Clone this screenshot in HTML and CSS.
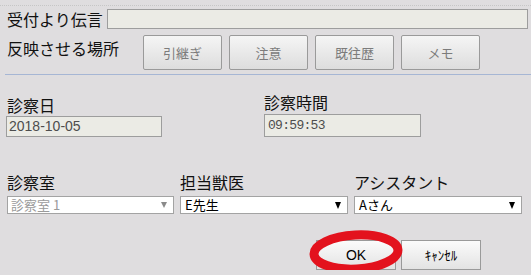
FILE: index.html
```
<!DOCTYPE html>
<html>
    <head>
        <meta charset="utf-8">
        <link rel="stylesheet" href="styles.css">
    </head>

    <body>
        <div class="dialog">
            <div class="message-row">
                <span class="label">受付より伝言</span>
                <span class="text-field"></span>
            </div>
            <div class="reflect-row">
                <span class="label reflect-label">反映させる場所</span>
                <div class="target-buttons">
                    <span class="target">引継ぎ</span>
                    <span class="target">注意</span>
                    <span class="target">既往歴</span>
                    <span class="target">メモ</span>
                </div>
            </div>
            <div class="divider"></div>

            <div class="visit-row">
                <div class="date-field">
                    <div class="label">診察日</div>
                    <div class="readonly date-value">2018-10-05</div>
                </div>
                <div class="time-field">
                    <div class="label">診察時間</div>
                    <div class="readonly time-value">09:59:53</div>
                </div>
            </div>

            <div class="select-row">
                <div class="pick">
                    <div class="label">診察室</div>
                    <div class="select disabled">
                        <span>診察室 1</span>
                        <span class="arrow"></span>
                    </div>
                </div>
                <div class="pick">
                    <div class="label">担当獣医</div>
                    <div class="select">
                        <span>E先生</span>
                        <span class="arrow"></span>
                    </div>
                </div>
                <div class="pick">
                    <div class="label">アシスタント</div>
                    <div class="select">
                        <span>Aさん</span>
                        <span class="arrow"></span>
                    </div>
                </div>
            </div>

            <div class="actions">
                <span class="action ok">OK</span>
                <span class="action cancel">ｷｬﾝｾﾙ</span>
                <svg class="mark" width="104" height="52" viewBox="0 0 104 52">
                    <ellipse cx="51" cy="25" rx="42" ry="17" fill="none"
                        stroke="#e3121d" stroke-width="9"
                        transform="rotate(-3 51 25)"/>
                </svg>
            </div>
        </div>
    </body>
</html>
```
FILE: styles.css
```
body {
    margin: 0;
    background: #dfdddf;
    font-family: "Noto Sans CJK JP", sans-serif;
    color: #111;
}

.dialog {
    margin-top: 5px;
    border-top: 1px dotted #c6c6c6;
    padding-top: 3px;
}

.label {
    font-size: 16px;
    line-height: 20px;
    white-space: nowrap;
}

.message-row {
    display: flex;
    height: 20px;
    padding: 0 3px 0 7px;
}
.message-row > .label {
    width: 100px;
}
.text-field {
    flex: 1;
    box-sizing: border-box;
    height: 20px;
    border: 1px solid #9d9d9d;
    background: #ebebe5;
}

.reflect-row {
    display: flex;
    margin-top: 6px;
    padding-left: 7px;
}
.reflect-label {
    width: 136px;
    padding-top: 3px;
}
.target-buttons {
    display: flex;
    gap: 7px;
}
.target {
    box-sizing: border-box;
    width: 79px;
    height: 35px;
    border: 1px solid #9a9a9a;
    border-radius: 2px;
    background: linear-gradient(#f5f5f5, #dddddd);
    color: #7c7c7c;
    font-size: 13px;
    line-height: 33px;
    text-align: center;
}

.divider {
    height: 1px;
    margin: 4px 0 0 5px;
    background: #a6b6d4;
}

.visit-row {
    display: flex;
    align-items: flex-start;
    padding: 17px 0 0 6px;
}
.date-field {
    width: 258px;
    padding-top: 3px;
}
.date-field > .label {
    padding-left: 1px;
}
.readonly {
    box-sizing: border-box;
    border: 1px solid #9d9d9d;
    background: #ebebe5;
    color: #4d4d4d;
}
.date-value {
    width: 156px;
    height: 21px;
    margin-top: 1px;
    padding-left: 2px;
    font: 14px/19px "Liberation Sans", sans-serif;
}
.time-value {
    width: 157px;
    height: 23px;
    margin-top: 2px;
    padding-left: 3px;
    font: 13px/21px "Liberation Mono", monospace;
    letter-spacing: -0.7px;
}

.select-row {
    display: grid;
    grid-template-columns: 167px 168px 168px;
    column-gap: 6px;
    margin-top: 35px;
    padding-left: 7px;
}
.select {
    display: flex;
    align-items: center;
    justify-content: space-between;
    box-sizing: border-box;
    height: 18px;
    margin-top: 4px;
    padding: 0 6px 0 4px;
    border: 1px solid #a3a3a3;
    background: #fff;
    color: #000;
    font-size: 13px;
    line-height: 16px;
}
.select.disabled {
    color: #9a9a9a;
    padding-left: 3px;
}
.arrow {
    width: 0;
    height: 0;
    border-left: 3.5px solid transparent;
    border-right: 3.5px solid transparent;
    border-top: 7px solid #000;
}
.disabled .arrow {
    border-left-width: 3px;
    border-right-width: 3px;
    border-top: 6px solid #8a8a8a;
}

.actions {
    position: relative;
    display: flex;
    gap: 5px;
    margin-top: 26px;
    padding-left: 316px;
}
.action {
    box-sizing: border-box;
    width: 80px;
    height: 30px;
    border: 1px solid #9a9a9a;
    background: linear-gradient(#fbfbfb, #e3e3e3);
    color: #000;
    text-align: center;
    line-height: 28px;
}
.ok {
    font: 14px/28px "Liberation Sans", sans-serif;
}
.cancel {
    font-size: 13px;
}
.mark {
    position: absolute;
    left: 305px;
    top: -13px;
    pointer-events: none;
}
```
